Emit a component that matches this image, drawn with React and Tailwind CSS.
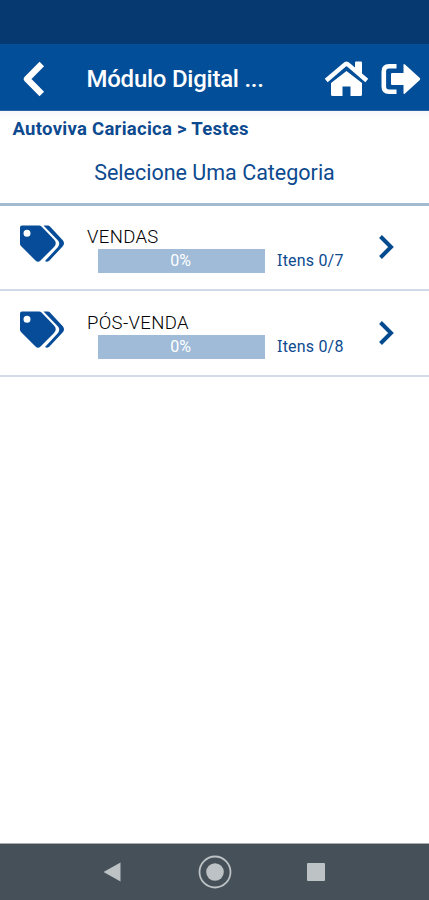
import React from 'react';

const categories = [
  { name: 'VENDAS', done: 0, total: 7 },
  { name: 'PÓS-VENDA', done: 0, total: 8 },
];

export default function App() {
  return (
    <div className="flex h-[900px] w-[429px] flex-col overflow-hidden bg-white font-['Roboto',sans-serif] text-[#0d4a8f]">
      <div className="h-11 shrink-0 bg-[#053970]" />
      <Header title="Módulo Digital ..." />

      <main className="flex-1">
        <div className="h-[95px] border-b-[3px] border-[#a3bbd0] bg-gradient-to-b from-[#f5f6f8] to-white to-10% pt-[7px]">
          <p className="pl-[12.500px] text-[18.500px] leading-[22px] font-bold tracking-[0.28px] whitespace-nowrap">Autoviva Cariacica &gt; Testes</p>
          <h2 className="mt-5 text-center text-[21.500px] leading-[26px] whitespace-nowrap">Selecione Uma Categoria</h2>
        </div>
        <ul className="-mt-px">
          {categories.map((category) => (
            <CategoryRow key={category.name} {...category} />
          ))}
        </ul>
      </main>

      <NavigationBar />
    </div>
  );
}

function Header({ title }) {
  return (
    <header className="flex h-[67px] shrink-0 items-center border-b border-[#2864a4] bg-[#034e98] pt-[3px] text-white">
      <button aria-label="Voltar" className="ml-[23px]">
        <svg width="22" height="36" viewBox="0 0 22 36" fill="none" stroke="currentColor" strokeWidth="6.4" strokeLinejoin="round">
          <path d="M18.800 3 4 18l14.800 15" />
        </svg>
      </button>
      <h1 className="ml-[41px] w-[238px] pl-[0.500px] text-[24px] leading-7 font-medium tracking-[-0.25px] whitespace-nowrap">{title}</h1>
      <button aria-label="Início">
        <svg width="45" height="36" viewBox="0 0 45 36" fill="currentColor">
          <path d="M22.500 10 7 22V33.500Q7 35 8.500 35H18.500V25.500H26.500V35H36.500Q38 35 38 33.500V22Z" />
          <path d="M31 1.500Q31 .5 32 .5H37Q38 .5 38 1.500V13l-7-5Z" />
          <path d="M2.200 19.500 20.500 3.800Q22.500 2 24.500 3.800L42.800 19.500" fill="none" stroke="currentColor" strokeWidth="4.400" strokeLinejoin="round" />
        </svg>
      </button>
      <button aria-label="Sair" className="ml-3">
        <svg width="40" height="32" viewBox="0 0 40 32" fill="currentColor">
          <path d="M15.500 3.300H8Q2.800 3.300 2.800 8.500V23.500Q2.800 28.700 8 28.700H15.500" fill="none" stroke="currentColor" strokeWidth="4.600" />
          <path d="M11 10H22.500V2Q22.500 .2 24 1.500L38.800 15Q39.600 16 38.800 17L24 30.500Q22.500 31.800 22.500 30V22H11Q10 22 10 21V11Q10 10 11 10Z" />
        </svg>
      </button>
    </header>
  );
}

function CategoryRow({ name, done, total }) {
  const percent = Math.round((done / total) * 100);

  return (
    <li className="flex h-[86px] items-start border-b-2 border-[#d2dae7]">
      <TagsIcon />
      <div className="ml-[21px] w-[292px] pt-5">
        <p className="h-6 pl-px text-[18.500px] leading-[24px] font-light tracking-[0.35px] text-black whitespace-nowrap">{name}</p>
        <div className="ml-3 flex h-6 items-center">
          <div className="relative h-6 w-[167px] bg-[#9fbbd8] pr-0.5 text-center text-[16px] leading-6 text-white">
            <div className="absolute inset-y-0 left-0 bg-[#034e98]" style={{ width: `${percent}%` }} />
            {percent}%
          </div>
          <span className="ml-3 h-6 text-[16px] leading-6 tracking-[0.2px] whitespace-nowrap">
            <span className="font-['Noto_Sans',sans-serif] leading-none">I</span>tens {done}/{total}
          </span>
        </div>
      </div>
      <svg className="mt-[29px]" width="16" height="26" viewBox="0 0 16 26" fill="none" stroke="#034b8e" strokeWidth="4">
        <path d="m2.500 2.500 10.500 10.500L2.500 23.500" />
      </svg>
    </li>
  );
}

function TagsIcon() {
  return (
    <svg className="mt-5 ml-[19px] text-[#064c98]" width="46" height="38" viewBox="0 0 46 38" fill="currentColor">
      <path
        fillRule="evenodd"
        d="M3 .5H20Q21.500 .5 22.500 1.500L35 14.500Q38.500 18.200 35 22L21.500 35.500Q19 38 16.500 35.500L2 21Q1 20 1 18.500V2.500Q1 .5 3 .5ZM8 4.800a3.500 3.500 0 1 0 0 7a3.500 3.500 0 1 0 0-7Z"
      />
      <path d="M24.500 .5H29Q30 .5 31 1.500L44 15.500Q46 18.300 44 21L30.500 35.500Q28.500 37.500 26 36L39 22Q41.500 18.300 39 15.500Z" />
    </svg>
  );
}

function NavigationBar() {
  return (
    <nav className="flex h-[57px] shrink-0 items-center border-t border-[#a9adb0] bg-[#455058] text-[#bdc2c5]">
      <svg className="ml-[103px]" width="18" height="20" viewBox="0 0 18 20" fill="currentColor">
        <path d="M17.500 .5v19L.5 10Z" />
      </svg>
      <svg className="ml-[77px]" width="34" height="34" viewBox="0 0 34 34">
        <circle cx="17" cy="17" r="15.500" fill="none" stroke="currentColor" strokeWidth="1.800" />
        <circle cx="17" cy="17" r="8.800" fill="currentColor" />
      </svg>
      <span className="ml-[75px] size-[18px] rounded-[1px] bg-[#bdc2c5]" />
    </nav>
  );
}
